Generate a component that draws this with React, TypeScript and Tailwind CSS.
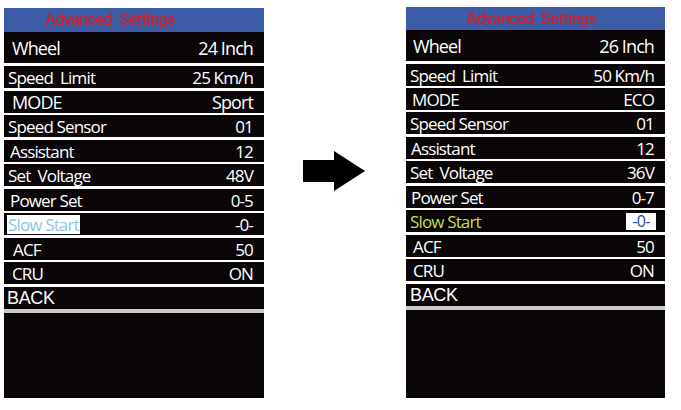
import React from 'react';

type Row = {
  label: string;
  value?: string;
  pl: string;
  sep: string;
  tall?: boolean;
  big?: boolean;
  hl?: 'left' | 'right';
  back?: boolean;
};

const rowsLeft: Row[] = [
  { label: 'Wheel', value: '24 Inch', pl: 'pl-[8px]', sep: 'mt-0', tall: true },
  { label: 'Speed  Limit', value: '25 Km/h', pl: 'pl-[4px]', sep: 'mt-[3px]' },
  { label: 'MODE', value: 'Sport', pl: 'pl-[8px]', sep: 'mt-[3px]', big: true },
  { label: 'Speed Sensor', value: '01', pl: 'pl-[4px]', sep: 'mt-[2px]' },
  { label: 'Assistant', value: '12', pl: 'pl-[6px]', sep: 'mt-[3px]' },
  { label: 'Set  Voltage', value: '48V', pl: 'pl-[4px]', sep: 'mt-[2px]' },
  { label: 'Power Set', value: '0-5', pl: 'pl-[6px]', sep: 'mt-[3px]' },
  { label: 'Slow Start', value: '-0-', pl: 'pl-[3px]', sep: 'mt-[2px]', hl: 'left' },
  { label: 'ACF', value: '50', pl: 'pl-[9px]', sep: 'mt-[3px]' },
  { label: 'CRU', value: 'ON', pl: 'pl-[8px]', sep: 'mt-[2px]' },
  { label: 'BACK', pl: 'pl-[3px]', sep: 'mt-[3px]', back: true },
];

const rowsRight: Row[] = [
  { label: 'Wheel', value: '26 Inch', pl: 'pl-[7px]', sep: 'mt-0', tall: true },
  { label: 'Speed  Limit', value: '50 Km/h', pl: 'pl-[4px]', sep: 'mt-[3px]' },
  { label: 'MODE', value: 'ECO', pl: 'pl-[6px]', sep: 'mt-[2px]' },
  { label: 'Speed Sensor', value: '01', pl: 'pl-[4px]', sep: 'mt-[2px]' },
  { label: 'Assistant', value: '12', pl: 'pl-[5px]', sep: 'mt-[3px]' },
  { label: 'Set  Voltage', value: '36V', pl: 'pl-[4px]', sep: 'mt-[2px]' },
  { label: 'Power Set', value: '0-7', pl: 'pl-[5px]', sep: 'mt-[3px]' },
  { label: 'Slow Start', value: '-0-', pl: 'pl-[4px]', sep: 'mt-[2px]', hl: 'right' },
  { label: 'ACF', value: '50', pl: 'pl-[7px]', sep: 'mt-[3px]' },
  { label: 'CRU', value: 'ON', pl: 'pl-[7px]', sep: 'mt-[2px]' },
  { label: 'BACK', pl: 'pl-[4px]', sep: 'mt-[3px]', back: true },
];

function Panel({ rows, left }: { rows: Row[]; left?: boolean }) {
  return (
    <div className={left ? 'mt-[8px] w-[260px] flex flex-col' : 'mt-[7px] w-[259px] flex flex-col'}>
      <div
        className={
          left
            ? 'h-[24px] bg-[#3d5ca6] flex items-center pl-[41px]'
            : 'h-[23px] bg-[#3d5ca6] flex items-center justify-center pr-[8px]'
        }
      >
        <span className="text-[16px] leading-none font-medium text-[#cc1f2a] tracking-[-0.03em] [word-spacing:4px] font-['Roboto',sans-serif] blur-[0.3px]">
          Advanced Settings
        </span>
      </div>
      {rows.map((r) => (
        <div
          key={r.label}
          className={`${r.sep} ${r.tall ? 'h-[31px]' : 'h-[22px]'} bg-[#0a0507] flex items-center justify-between ${r.pl} pr-[11px] text-white`}
        >
          {r.back ? (
            <span className="text-[18px] leading-none font-['Liberation_Sans',sans-serif] tracking-[-0.02em]">
              {r.label}
            </span>
          ) : (
            <>
              <span
                className={
                  r.hl === 'left'
                    ? "bg-white text-[#8cc6df] px-[1px] h-[19px] flex items-center whitespace-pre text-[17px] leading-none font-medium font-['Open_Sans',sans-serif] tracking-[-0.05em]"
                    : r.hl === 'right'
                      ? "text-[#c7dc4e] whitespace-pre text-[17px] leading-none font-medium font-['Open_Sans',sans-serif] tracking-[-0.05em]"
                      : `whitespace-pre ${r.tall || r.big ? 'text-[18px]' : 'text-[17px]'} leading-none font-medium font-['Open_Sans',sans-serif] tracking-[-0.05em]`
                }
              >
                {r.label}
              </span>
              <span
                className={
                  r.hl === 'right'
                    ? "bg-white text-[#2443a3] w-[30px] h-[17px] -mr-[2px] flex items-center justify-center text-[16px] leading-none font-medium font-['Open_Sans',sans-serif] tracking-[-0.05em]"
                    : `whitespace-pre ${r.tall || r.big ? 'text-[18px]' : 'text-[17px]'} leading-none font-medium font-['Open_Sans',sans-serif] tracking-[-0.05em]`
                }
              >
                {r.value}
              </span>
            </>
          )}
        </div>
      ))}
      <div className="h-[4px] bg-[#c9c9c9]" />
      <div className="flex-1 bg-[#0a0507]" />
    </div>
  );
}

export default function App() {
  return (
    <div className="w-[681px] h-[410px] bg-white flex items-stretch overflow-hidden">
      <div className="ml-[4px] h-[398px] flex">
        <Panel rows={rowsLeft} left />
      </div>
      <div className="ml-[39px] mt-[151px]">
        <svg width="62" height="40" viewBox="0 0 62 40">
          <polygon points="0,9 31,9 31,0 62,20 31,40 31,31 0,31" fill="#000" />
        </svg>
      </div>
      <div className="ml-[41px] h-[398px] flex">
        <Panel rows={rowsRight} />
      </div>
    </div>
  );
}
